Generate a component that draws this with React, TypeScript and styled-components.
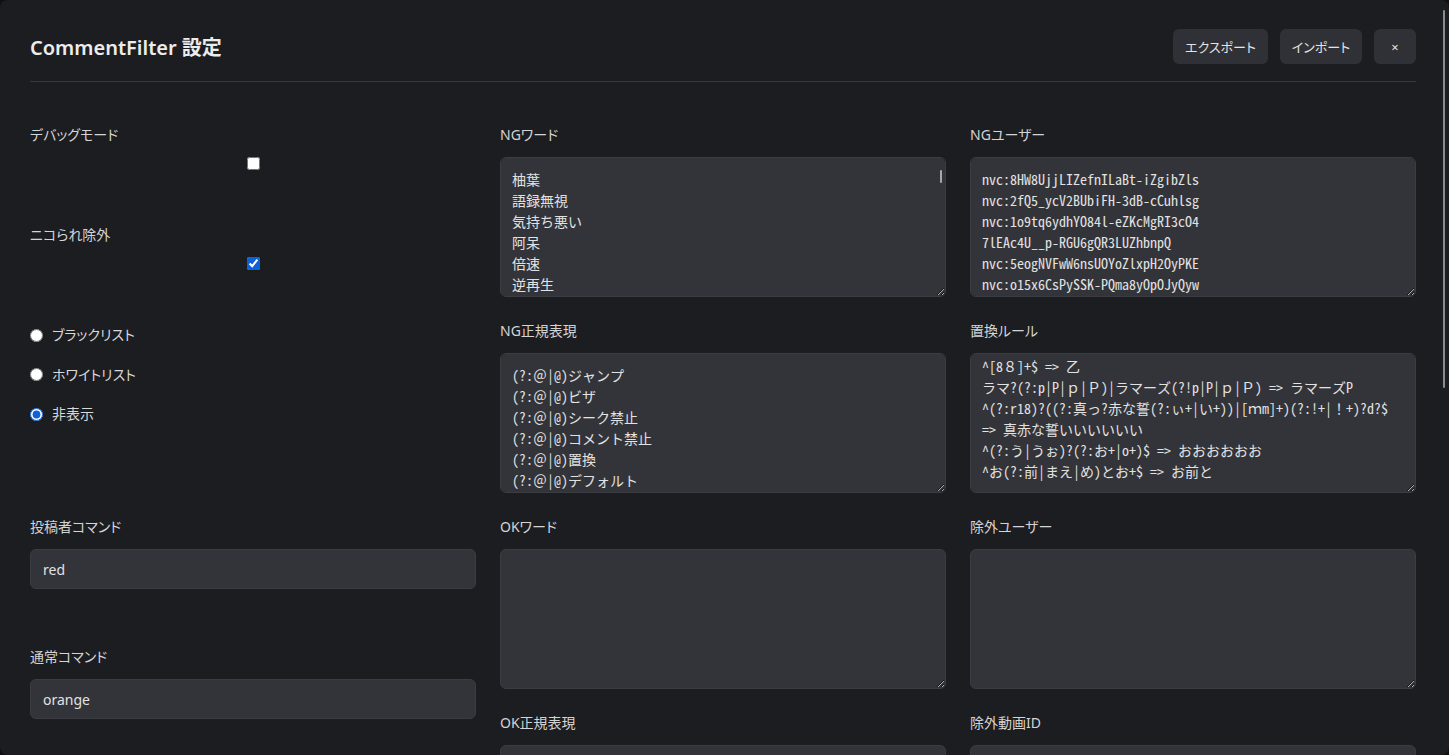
import React, { useEffect, useRef } from "react";
import styled, { createGlobalStyle } from "styled-components";

const GlobalStyle = createGlobalStyle`
  html, body { margin: 0; padding: 0; height: 100%; background: #101013; }
  #root { height: 100%; }
  * { box-sizing: border-box; }
`;

const SANS = `"Noto Sans", "Noto Sans CJK JP", sans-serif`;
const MONO = `"Noto Sans Mono CJK JP", "Noto Sans CJK JP", monospace`;

const Modal = styled.div`
  position: relative;
  height: 100vh;
  background: #1c1d21;
  border-radius: 8px;
  overflow: hidden;
  color: #d6d6d6;
  font-family: ${SANS};
`;

const Scroller = styled.div`
  height: 100%;
  overflow-y: auto;
  padding: 29px 33px 0 30px;
  scrollbar-width: none;
  &::-webkit-scrollbar { width: 0; }
`;

const Thumb = styled.div<{ $top: number; $right: number; $h: number; $w: number; $color: string }>`
  position: absolute;
  top: ${(p) => p.$top}px;
  right: ${(p) => p.$right}px;
  width: ${(p) => p.$w}px;
  height: ${(p) => p.$h}px;
  background: ${(p) => p.$color};
  border-radius: 1px;
  pointer-events: none;
`;

const Inner = styled.div`
  min-height: 1480px;
`;

const Header = styled.header`
  display: flex;
  align-items: center;
  justify-content: space-between;
  height: 53px;
  padding-bottom: 17px;
  border-bottom: 1px solid #37383d;
`;

const Title = styled.h1`
  margin: 0;
  padding-top: 3px;
  font-size: 20px;
  line-height: 28px;
  font-weight: 600;
  color: #ececec;
  font-feature-settings: "palt";
`;

const Actions = styled.div`
  display: flex;
  gap: 12px;
`;

const Button = styled.button<{ $w: number }>`
  width: ${(p) => p.$w}px;
  height: 35px;
  padding: 0;
  border: 0;
  border-radius: 6px;
  background: #303136;
  color: #e4e4e4;
  font-family: ${SANS};
  font-size: 13px;
  font-feature-settings: "palt";
  cursor: pointer;
`;

const Main = styled.main`
  display: grid;
  grid-template-columns: repeat(3, 1fr);
  column-gap: 24px;
  padding-top: 43px;
  align-items: start;
`;

const LeftColumn = styled.div`
  display: flex;
  flex-direction: column;
`;

const Block = styled.div<{ $after?: number }>`
  margin-bottom: ${(p) => p.$after ?? 0}px;
`;

const Label = styled.label`
  display: block;
  font-size: 14px;
  line-height: 20px;
  color: #d4d4d4;
  font-feature-settings: "palt";
`;

const Checkbox = styled.input.attrs({ type: "checkbox" })`
  display: block;
  width: 13px;
  height: 13px;
  margin: 12px auto 0;
  accent-color: #0e62d8;
`;

const RadioGroup = styled.div`
  display: flex;
  flex-direction: column;
  gap: 19.5px;
`;

const RadioRow = styled.label`
  display: flex;
  align-items: center;
  gap: 9px;
  font-size: 14px;
  line-height: 20px;
  color: #d8d8d8;
  font-feature-settings: "palt";
`;

const Radio = styled.input.attrs({ type: "radio" })`
  width: 13px;
  height: 13px;
  margin: 0;
  accent-color: #0e62d8;
`;

const TextInput = styled.input`
  display: block;
  width: 100%;
  height: 40px;
  margin-top: 12px;
  padding: 0 12px;
  background: #333439;
  border: 1px solid #3c3d43;
  border-radius: 6px;
  color: #e2e2e2;
  font-family: ${SANS};
  font-size: 14px;
  outline: none;
`;

const FieldsGrid = styled.div`
  grid-column: span 2;
  display: grid;
  grid-template-columns: 1fr 1fr;
  column-gap: 24px;
  row-gap: 24px;
  align-content: start;
`;

const Field = styled.div`
  display: flex;
  flex-direction: column;
`;

const AreaWrap = styled.div`
  position: relative;
  margin-top: 12px;
`;

const TextArea = styled.textarea`
  display: block;
  width: 100%;
  height: 140px;
  padding: 11px 11px 10px;
  background: #333439;
  border: 1px solid #3c3d43;
  border-radius: 6px;
  color: #e2e2e2;
  font-family: ${MONO};
  font-size: 14px;
  line-height: 21px;
  outline: none;
  scrollbar-width: none;
  &::-webkit-scrollbar { width: 0; }
`;

const ngWords = ["柚葉", "語録無視", "気持ち悪い", "阿呆", "倍速", "逆再生"].join("\n");

const ngUsers = [
  "nvc:8HW8UjjLIZefnILaBt-iZgibZls",
  "nvc:2fQ5_ycV2BUbiFH-3dB-cCuhlsg",
  "nvc:1o9tq6ydhYO84l-eZKcMgRI3cO4",
  "7lEAc4U__p-RGU6gQR3LUZhbnpQ",
  "nvc:5eogNVFwW6nsUOYoZlxpH2OyPKE",
  "nvc:o15x6CsPySSK-PQma8yOpOJyQyw",
].join("\n");

const ngRegex = [
  "(?:＠|@)ジャンプ",
  "(?:＠|@)ビザ",
  "(?:＠|@)シーク禁止",
  "(?:＠|@)コメント禁止",
  "(?:＠|@)置換",
  "(?:＠|@)デフォルト",
].join("\n");

const replaceRules = [
  "^[8８]+$ => 乙",
  "ラマ?(?:p|P|ｐ|Ｐ)|ラマーズ(?!p|P|ｐ|Ｐ) => ラマーズP",
  "^(?:r18)?((?:真っ?赤な誓(?:ぃ+|い+))|[ｍm]+)(?:!+|！+)?d?$ => 真赤な誓いいいいいい",
  "^(?:う|うぉ)?(?:お+|o+)$ => おおおおおお",
  "^お(?:前|まえ|め)とお+$ => お前と",
].join("\n");

export default function App() {
  const rulesRef = useRef<HTMLTextAreaElement>(null);
  useEffect(() => {
    if (rulesRef.current) rulesRef.current.scrollTop = rulesRef.current.scrollHeight;
  }, []);

  return (
    <>
      <GlobalStyle />
      <Modal>
        <Scroller>
          <Inner>
            <Header>
              <Title>CommentFilter 設定</Title>
              <Actions>
                <Button $w={95}>エクスポート</Button>
                <Button $w={82}>インポート</Button>
                <Button $w={42}>×</Button>
              </Actions>
            </Header>
            <Main>
              <LeftColumn>
                <Block $after={55}>
                  <Label>デバッグモード</Label>
                  <Checkbox />
                </Block>
                <Block $after={55}>
                  <Label>ニコられ除外</Label>
                  <Checkbox defaultChecked />
                </Block>
                <Block $after={93}>
                  <RadioGroup>
                    <RadioRow>
                      <Radio name="mode" />
                      ブラックリスト
                    </RadioRow>
                    <RadioRow>
                      <Radio name="mode" />
                      ホワイトリスト
                    </RadioRow>
                    <RadioRow>
                      <Radio name="mode" defaultChecked />
                      非表示
                    </RadioRow>
                  </RadioGroup>
                </Block>
                <Block $after={58}>
                  <Label>投稿者コマンド</Label>
                  <TextInput defaultValue="red" />
                </Block>
                <Block>
                  <Label>通常コマンド</Label>
                  <TextInput defaultValue="orange" />
                </Block>
              </LeftColumn>
              <FieldsGrid>
                <Field>
                  <Label>NGワード</Label>
                  <AreaWrap>
                    <TextArea defaultValue={ngWords} spellCheck={false} />
                    <Thumb $top={13} $right={4} $w={2} $h={13} $color="#a8a8ab" />
                  </AreaWrap>
                </Field>
                <Field>
                  <Label>NGユーザー</Label>
                  <AreaWrap>
                    <TextArea defaultValue={ngUsers} spellCheck={false} />
                  </AreaWrap>
                </Field>
                <Field>
                  <Label>NG正規表現</Label>
                  <AreaWrap>
                    <TextArea defaultValue={ngRegex} spellCheck={false} />
                  </AreaWrap>
                </Field>
                <Field>
                  <Label>置換ルール</Label>
                  <AreaWrap>
                    <TextArea ref={rulesRef} defaultValue={replaceRules} spellCheck={false} />
                  </AreaWrap>
                </Field>
                <Field>
                  <Label>OKワード</Label>
                  <AreaWrap>
                    <TextArea spellCheck={false} />
                  </AreaWrap>
                </Field>
                <Field>
                  <Label>除外ユーザー</Label>
                  <AreaWrap>
                    <TextArea spellCheck={false} />
                  </AreaWrap>
                </Field>
                <Field>
                  <Label>OK正規表現</Label>
                  <AreaWrap>
                    <TextArea spellCheck={false} />
                  </AreaWrap>
                </Field>
                <Field>
                  <Label>除外動画ID</Label>
                  <AreaWrap>
                    <TextArea spellCheck={false} />
                  </AreaWrap>
                </Field>
              </FieldsGrid>
            </Main>
          </Inner>
        </Scroller>
        <Thumb $top={10} $right={4} $w={2} $h={378} $color="#8b8b8e" />
      </Modal>
    </>
  );
}
